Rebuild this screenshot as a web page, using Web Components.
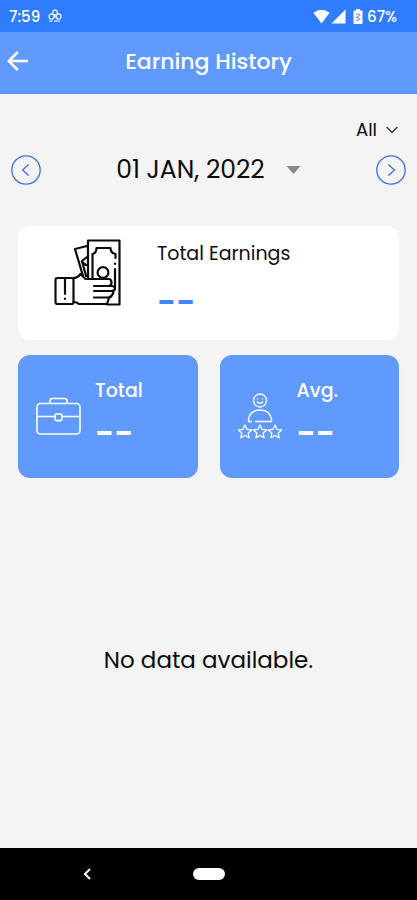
<!DOCTYPE html>
<html lang="en">
<head>
<meta charset="utf-8">
<meta name="viewport" content="width=device-width, initial-scale=1">
<title>Earning History</title>
<style>
html, body { margin: 0; }
body { font-family: Poppins, Inter, "Open Sans", sans-serif; color: #0c0c0c; background: #f4f4f4; }
</style>
</head>
<body>
<earning-page></earning-page>
<script>
const define = (name, html) => {
  const template = document.createElement('template');
  template.innerHTML = html;
  customElements.define(name, class extends HTMLElement {
    constructor() {
      super();
      this.attachShadow({ mode: 'open' }).append(template.content.cloneNode(true));
    }
  });
};

define('status-bar', `
<style>
:host { display: flex; align-items: center; height: 32px; padding: 0 20px 0 9px; background: #2f7cff; color: #fff; font-size: 15px; font-weight: 500; box-sizing: border-box; }
svg { display: block; }
.app { margin: 0 auto 0 8px; }
.wifi { margin-right: 1px; }
.signal { margin-right: 7px; }
.battery { margin-right: 4px; }
</style>
<span>7:59</span>
<svg class="app" width="14" height="14" viewBox="0 0 14 14" fill="none" stroke="#dbe8ff" stroke-width="1.3"><circle cx="7" cy="3.4" r="2.4"/><circle cx="3.5" cy="7.6" r="2.6"/><circle cx="10.5" cy="7.6" r="2.6"/><path d="M5 9.5 7 6l2.5 3.5M1 12.2h3.5M6 12.2h6"/></svg>
<svg class="wifi" width="17" height="15" viewBox="0 0 17 15" fill="#fff"><path d="M.4 3.8Q8.5-2.2 16.6 3.8L8.5 14.5Z"/></svg>
<svg class="signal" width="15" height="15" viewBox="0 0 15 15" fill="#fff"><path d="M14.5.5v14H.5Z"/></svg>
<svg class="battery" width="10" height="15" viewBox="0 0 10 15"><path fill="#fff" d="M3 0h4v1.5h1.5q1 0 1 1V14q0 1-1 1h-7q-1 0-1-1V2.5q0-1 1-1H3Z"/><path d="M3 6q2-2.5 4 0L3.5 8.5 7 9.5q-1 2.5-4 1.5" fill="none" stroke="#8a8df5" stroke-width="1.1"/></svg>
<span>67%</span>`);

define('app-header', `
<style>
:host { display: grid; grid-template-columns: 40px 1fr 40px; align-items: center; height: 62px; box-sizing: border-box; background: #609aff; color: #fff; border-bottom: 1px solid #5490f8; }
button { all: unset; display: flex; height: 40px; align-items: center; padding-left: 7px; cursor: pointer; margin-bottom: 4px; }
h1 { margin: 0 0 2px; text-align: center; font-size: 22px; line-height: 32px; font-weight: 500; }
</style>
<button type="button" aria-label="Back"><svg width="22" height="20" viewBox="0 0 22 20" fill="none" stroke="#fff" stroke-width="2.6"><path d="M10.8 1 1.8 10l9 9M2 10h19"/></svg></button>
<h1><slot></slot></h1>`);

define('round-button', `
<style>
:host { display: block; }
:host([next]) svg { transform: scaleX(-1); }
button { all: unset; display: block; cursor: pointer; }
svg { display: block; }
</style>
<button type="button" aria-label="Change day"><svg width="30" height="30" viewBox="0 0 30 30" fill="none" stroke="#3d6df2" stroke-width="1.3"><circle cx="15" cy="15" r="14.2"/><path d="m17.6 9.5-6 5.5 6 5.5"/></svg></button>`);

define('filter-bar', `
<style>
:host { display: block; padding: 24px 11px 0; }
.pick { display: grid; align-items: center; }
.pick > * { grid-area: 1 / 1; }
.pick svg { justify-self: end; pointer-events: none; }
select { appearance: none; border: 0; margin: 0; padding: 0; background: none; font: inherit; color: inherit; field-sizing: content; cursor: pointer; }
.range { width: max-content; margin: 0 8px 0 auto; font-size: 18px; line-height: 24px; }
.range select { padding-right: 21px; }
.row { display: flex; justify-content: space-between; align-items: center; margin-top: 12px; }
.date { font-size: 25px; line-height: 32px; }
.date select { padding-right: 36px; }
</style>
<div class="pick range">
<select aria-label="Range"><option>All</option></select>
<svg width="12" height="8" viewBox="0 0 12 8" fill="none" stroke="#333" stroke-width="1.3"><path d="m.6 1 5.4 5.5L11.4 1"/></svg>
</div>
<div class="row">
<round-button></round-button>
<div class="pick date">
<select aria-label="Date"><option>01 JAN, 2022</option></select>
<svg width="15" height="8" viewBox="0 0 15 8" fill="#888"><path d="M.5 0h14l-7 8Z"/></svg>
</div>
<round-button next></round-button>
</div>`);

define('stat-card', `
<style>
:host { display: flex; align-items: flex-start; box-sizing: border-box; min-width: 0; border-radius: 12px; background: #609aff; color: #fff; height: 123px; padding: 21px 0 0 18px; font-size: 19px; font-weight: 500; }
:host([wide]) { background: #fff; color: #0c0c0c; height: 114px; padding: 13px 0 0 36px; font-weight: 400; }
.icon { flex: none; width: 59px; padding-top: 17px; }
:host([wide]) .icon { width: 103px; padding-top: 0; }
.text { display: grid; line-height: 30px; gap: 13px; }
:host([wide]) .text { gap: 19px; }
.value { font-size: 33px; font-weight: 600; line-height: 30px; }
:host([wide]) .value { color: #4388fb; }
</style>
<div class="icon"><slot name="icon"></slot></div>
<div class="text"><span><slot></slot></span><span class="value"><slot name="value"></slot></span></div>`);

define('money-icon', `
<style>:host, svg { display: block; }</style>
<svg width="67" height="68" viewBox="0 0 67 68" fill="none" stroke="#0c0c0c" stroke-width="2.2" stroke-linejoin="round" stroke-linecap="round">
<path d="M34 40V1.500h31.500v64H53M33 7 21 10l8 27M33 18l-5 4 4 15M28 23l4 3"/>
<path d="M38.500 39V15q4-1 4-6h14q0 5 5 6v4M61 24.500v.5M61 30v18"/>
<circle cx="49" cy="33.500" r="5.400"/>
<rect x="1.500" y="39" width="18" height="26" rx="2"/>
<path d="M11 39v16M11 59.500v.5M19.500 39q4 0 7-4l5 5h23q3 0 3 3.500t-3 3.500H40M57 47q4 0 4 2.500t-4 2.500H40M59 52q1 2-1 4-1 2.500-4 2.500H40M55 59q-1 3-2 6H25q-2-2-5.500-2"/>
</svg>`);

define('briefcase-icon', `
<style>:host, svg { display: block; } :host { padding-top: 4px; }</style>
<svg width="45" height="39" viewBox="0 0 45 39" fill="none" stroke="#fff" stroke-width="1.6">
<rect x="1" y="6.5" width="43" height="30.5" rx="3.5"/>
<path d="M14 6.5V4Q14 1.500 16.500 1.500h12Q31 1.500 31 4v2.500M1 19.500h18M26 19.500H44"/>
<rect x="19.200" y="17" width="6.600" height="6.600" rx="1"/>
</svg>`);

define('rating-icon', `
<style>:host, svg { display: block; }</style>
<svg width="44" height="46" viewBox="0 0 44 46" fill="none" stroke="#fff" stroke-width="1.3" stroke-linejoin="round">
<circle cx="22" cy="7.5" r="6.5"/><path d="M19 8.500q3 3.500 6 0M19.500 5.500v1M24.500 5.500v1"/>
<path d="M14 28.500h-3.500v-2Q12 17 22 17t11.500 9.500v2H17"/>
<path d="m7 32 2 4.300 4.700.6-3.500 3.200.9 4.700L7 42.500l-4.100 2.300.9-4.700L.3 36.900 5 36.300Z"/>
<path d="m22 32 2 4.300 4.700.6-3.500 3.200.9 4.700-4.100-2.300-4.100 2.300.9-4.700-3.500-3.200 4.700-.6Z"/>
<path d="m37 32 2 4.300 4.700.6-3.500 3.200.9 4.700-4.100-2.300-4.100 2.300.9-4.700-3.500-3.200 4.700-.6Z"/>
</svg>`);

define('nav-bar', `
<style>
:host { display: grid; grid-template-columns: 1fr 34px 1fr; align-items: center; height: 52px; background: #000; }
button { all: unset; display: block; cursor: pointer; }
.back { justify-self: center; margin-right: 18px; }
.home { width: 32px; height: 12px; border-radius: 6px; background: #fff; justify-self: center; }
svg { display: block; }
</style>
<button class="back" type="button" aria-label="Back"><svg width="8" height="12" viewBox="0 0 8 12" fill="none" stroke="#fff" stroke-width="2"><path d="M7 1 2 6l5 5"/></svg></button>
<button class="home" type="button" aria-label="Home"></button>`);

define('earning-page', `
<style>
:host { display: flex; flex-direction: column; min-height: 100vh; }
main { flex: 1; display: flex; flex-direction: column; }
.cards { display: grid; grid-template-columns: 1fr 1fr; gap: 15px 22px; padding: 40px 18px 0; }
.cards [wide] { grid-column: 1 / -1; }
.empty { flex: 1; display: grid; place-items: center; margin: 0; font-size: 23px; line-height: 32px; padding-bottom: 6px; }
</style>
<status-bar></status-bar>
<app-header>Earning History</app-header>
<main>
<filter-bar></filter-bar>
<section class="cards">
<stat-card wide><money-icon slot="icon"></money-icon>Total Earnings<span slot="value">--</span></stat-card>
<stat-card><briefcase-icon slot="icon"></briefcase-icon>Total<span slot="value">--</span></stat-card>
<stat-card><rating-icon slot="icon"></rating-icon>Avg.<span slot="value">--</span></stat-card>
</section>
<p class="empty">No data available.</p>
</main>
<nav-bar></nav-bar>`);
</script>
</body>
</html>
